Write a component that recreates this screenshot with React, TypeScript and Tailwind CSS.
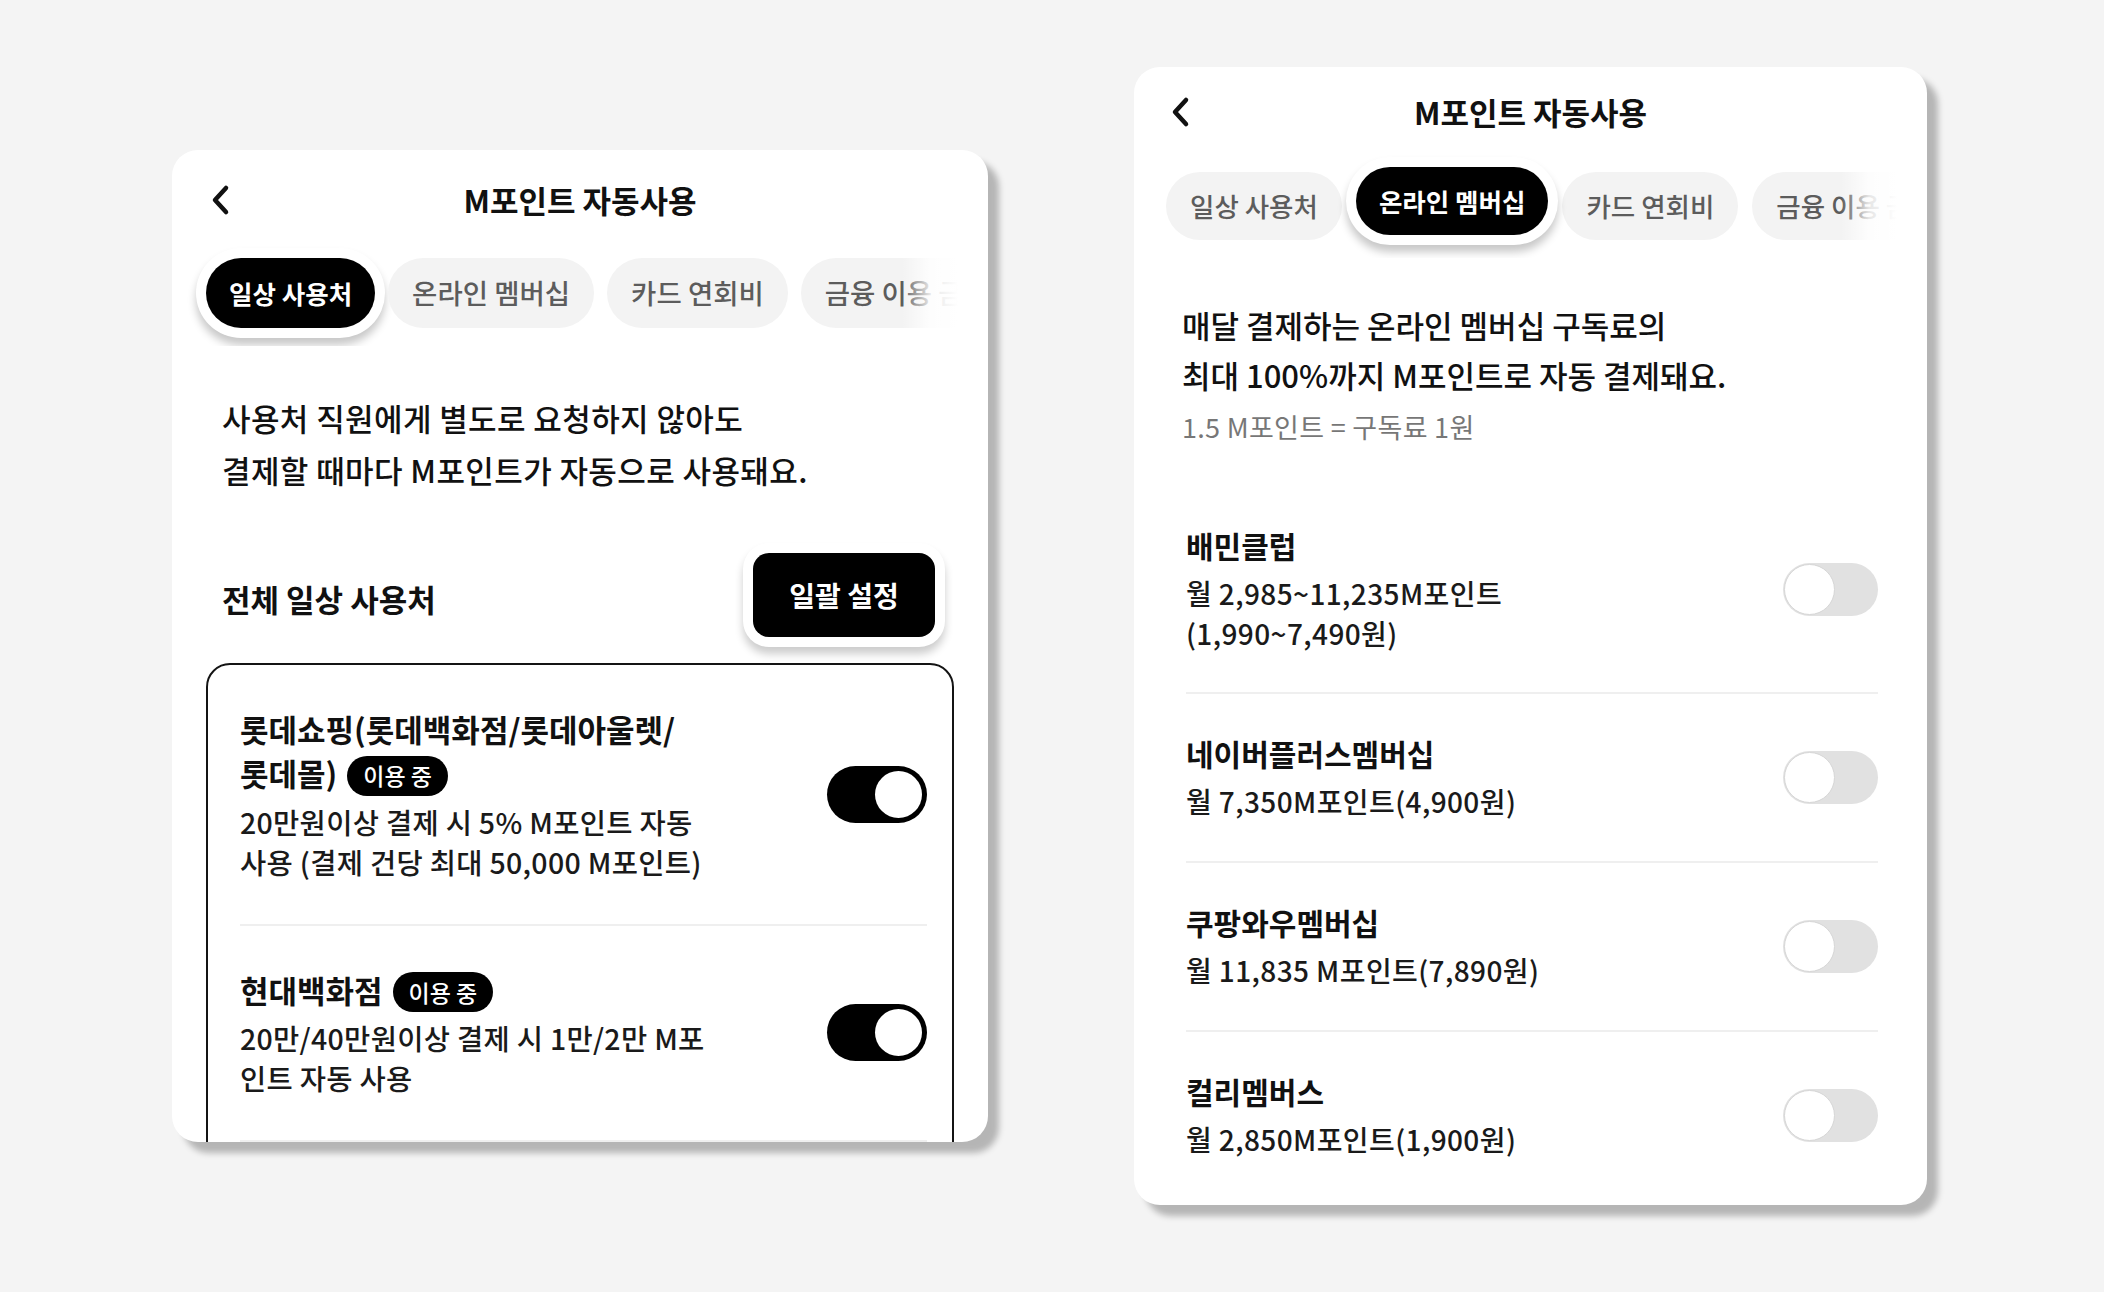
import React from "react";

const FONT = "font-['Noto_Sans_CJK_KR',sans-serif]";

const Chevron = () => (
  <svg width="24" height="32" viewBox="0 0 24 32" fill="none">
    <path
      d="M17 4 L6 16 L17 28"
      stroke="#111"
      strokeWidth="4.5"
      strokeLinecap="round"
      strokeLinejoin="round"
    />
  </svg>
);

const Header = ({ className }: { className: string }) => (
  <div className={`grid grid-cols-[1fr_auto_1fr] items-center ${className}`}>
    <div className="flex items-center">
      <Chevron />
    </div>
    <h1 className="text-[31px] font-bold text-[#111]">M포인트 자동사용</h1>
    <div />
  </div>
);

interface TabsProps {
  active: number;
  size: "lg" | "md";
}

const TABS = ["일상 사용처", "온라인 멤버십", "카드 연회비", "금융 이용 금액"];

const Tabs = ({ active, size }: TabsProps) => {
  const lg = size === "lg";
  return (
    <div className="relative overflow-hidden -my-[18px] py-[18px] mr-[30px]">
      <div className={`flex ${lg ? "gap-[13px] pl-[34px]" : "gap-[14px] pl-[32px]"}`}>
        {TABS.map((t, i) =>
          i === active ? (
            <div
              key={t}
              className={`shrink-0 flex items-center rounded-full bg-black px-[23px] text-white font-bold shadow-[0_0_0_10px_#fff,0_7px_9px_10px_rgba(0,0,0,0.22)] ${
                lg ? "h-[70px] text-[25.5px]" : "h-[68px] text-[25.5px] -translate-y-[5px]"
              }`}
            >
              {t}
            </div>
          ) : (
            <div
              key={t}
              className={`shrink-0 flex items-center rounded-full bg-[#f3f3f3] px-[24px] text-[#5c5c5c] font-medium ${
                lg ? "h-[70px] text-[27.5px]" : "h-[68px] text-[26.5px]"
              }`}
            >
              {t}
            </div>
          ),
        )}
      </div>
      <div className="absolute right-0 top-0 bottom-0 w-[56px] bg-gradient-to-l from-white via-white/85 to-transparent" />
    </div>
  );
};

const ToggleOn = () => (
  <div className="shrink-0 w-[100px] h-[57px] rounded-full bg-black flex items-center justify-end pr-[5px]">
    <div className="w-[47px] h-[47px] rounded-full bg-white" />
  </div>
);

const ToggleOff = () => (
  <div className="shrink-0 w-[95px] h-[53px] rounded-full bg-[#e1e1e1] flex items-center pl-[1px]">
    <div className="w-[51px] h-[51px] rounded-full bg-white border border-[#d6d6d6]" />
  </div>
);

const Badge = () => (
  <span className="inline-flex items-center align-middle h-[40px] px-[16px] ml-[10px] rounded-full bg-black text-white text-[23px] font-medium leading-none -mt-[4px]">
    이용 중
  </span>
);

const DailyCard = () => (
  <div className="w-[816px] h-[992px] mt-[150px] shrink-0 bg-white rounded-[26px] shadow-[11px_11px_6px_rgba(0,0,0,0.26)] overflow-hidden">
    <Header className="px-[37px] pt-[22px] h-[78px]" />
    <div className="mt-[30px]">
      <Tabs active={0} size="lg" />
    </div>
    <p className="mt-[64px] px-[50px] text-[31px] leading-[52px] font-medium text-[#111] tracking-[0.4px]">
      사용처 직원에게 별도로 요청하지 않아도
      <br />
      결제할 때마다 M포인트가 자동으로 사용돼요.
    </p>
    <div className="mt-[57px] flex items-center justify-between pl-[50px] pr-[53px]">
      <span className="text-[31px] font-bold text-[#111] mt-[8px]">
        전체 일상 사용처
      </span>
      <button className="w-[182px] h-[84px] rounded-[16px] bg-black text-white text-[28px] font-bold shadow-[0_0_0_10px_#fff,0_7px_9px_10px_rgba(0,0,0,0.2)]">
        일괄 설정
      </button>
    </div>
    <div className="mt-[26px] mx-[34px] border-2 border-[#141414] rounded-[24px] pl-[32px] pr-[25px]">
      <div className="flex items-center justify-between py-[42px] border-b-2 border-[#efefef]">
        <div className="w-[520px]">
          <div className="text-[31px] leading-[44px] font-bold text-[#111]">
            롯데쇼핑(롯데백화점/롯데아울렛/
            <br />
            롯데몰)
            <Badge />
          </div>
          <p className="mt-[6px] text-[28.5px] leading-[40px] font-medium text-[#1a1a1a] tracking-[0.3px]">
            20만원이상 결제 시 5% M포인트 자동
            <br />
            사용 (결제 건당 최대 50,000 M포인트)
          </p>
        </div>
        <ToggleOn />
      </div>
      <div className="flex items-center justify-between py-[42px] border-b-2 border-[#efefef]">
        <div className="w-[520px]">
          <div className="text-[31px] leading-[44px] font-bold text-[#111]">
            현대백화점
            <Badge />
          </div>
          <p className="mt-[6px] text-[28.5px] leading-[40px] font-medium text-[#1a1a1a] tracking-[0.3px]">
            20만/40만원이상 결제 시 1만/2만 M포
            <br />
            인트 자동 사용
          </p>
        </div>
        <ToggleOn />
      </div>
      <div className="h-[140px]" />
    </div>
  </div>
);

const MEMBERSHIPS = [
  { name: "배민클럽", desc: ["월 2,985~11,235M포인트", "(1,990~7,490원)"] },
  { name: "네이버플러스멤버십", desc: ["월 7,350M포인트(4,900원)"] },
  { name: "쿠팡와우멤버십", desc: ["월 11,835 M포인트(7,890원)"] },
  { name: "컬리멤버스", desc: ["월 2,850M포인트(1,900원)"] },
];

const OnlineCard = () => (
  <div className="w-[793px] h-[1138px] mt-[67px] shrink-0 bg-white rounded-[26px] shadow-[11px_11px_6px_rgba(0,0,0,0.26)] overflow-hidden">
    <Header className="px-[35px] pt-[17px] h-[73px]" />
    <div className="mt-[32px]">
      <Tabs active={1} size="md" />
    </div>
    <p className="mt-[60px] pl-[48px] text-[31px] leading-[50px] font-medium text-[#111]">
      매달 결제하는 온라인 멤버십 구독료의
      <br />
      최대 100%까지 M포인트로 자동 결제돼요.
    </p>
    <p className="mt-[10px] pl-[48px] text-[27px] leading-[34px] text-[#777] tracking-[0.3px]">
      1.5 M포인트 = 구독료 1원
    </p>
    <div className="mt-[38px] pl-[52px] pr-[49px]">
      {MEMBERSHIPS.map((m, i) => (
        <div
          key={m.name}
          className={`flex items-center justify-between ${
            i === 0 ? "pt-[44px] pb-[39px]" : "pt-[40px] pb-[40px]"
          } ${i < MEMBERSHIPS.length - 1 ? "border-b-2 border-[#efefef]" : ""}`}
        >
          <div>
            <div className="text-[30px] leading-[38px] font-bold text-[#111]">
              {m.name}
            </div>
            <p className="mt-[9px] text-[28px] leading-[40px] font-medium text-[#1a1a1a] tracking-[0.4px]">
              {m.desc.map((d, j) => (
                <React.Fragment key={d}>
                  {j > 0 && <br />}
                  {d}
                </React.Fragment>
              ))}
            </p>
          </div>
          <ToggleOff />
        </div>
      ))}
    </div>
  </div>
);

export default function App() {
  return (
    <div
      className={`${FONT} w-[2104px] h-[1292px] bg-[#f4f4f4] flex items-start pl-[172px] gap-[146px] overflow-hidden`}
    >
      <DailyCard />
      <OnlineCard />
    </div>
  );
}
